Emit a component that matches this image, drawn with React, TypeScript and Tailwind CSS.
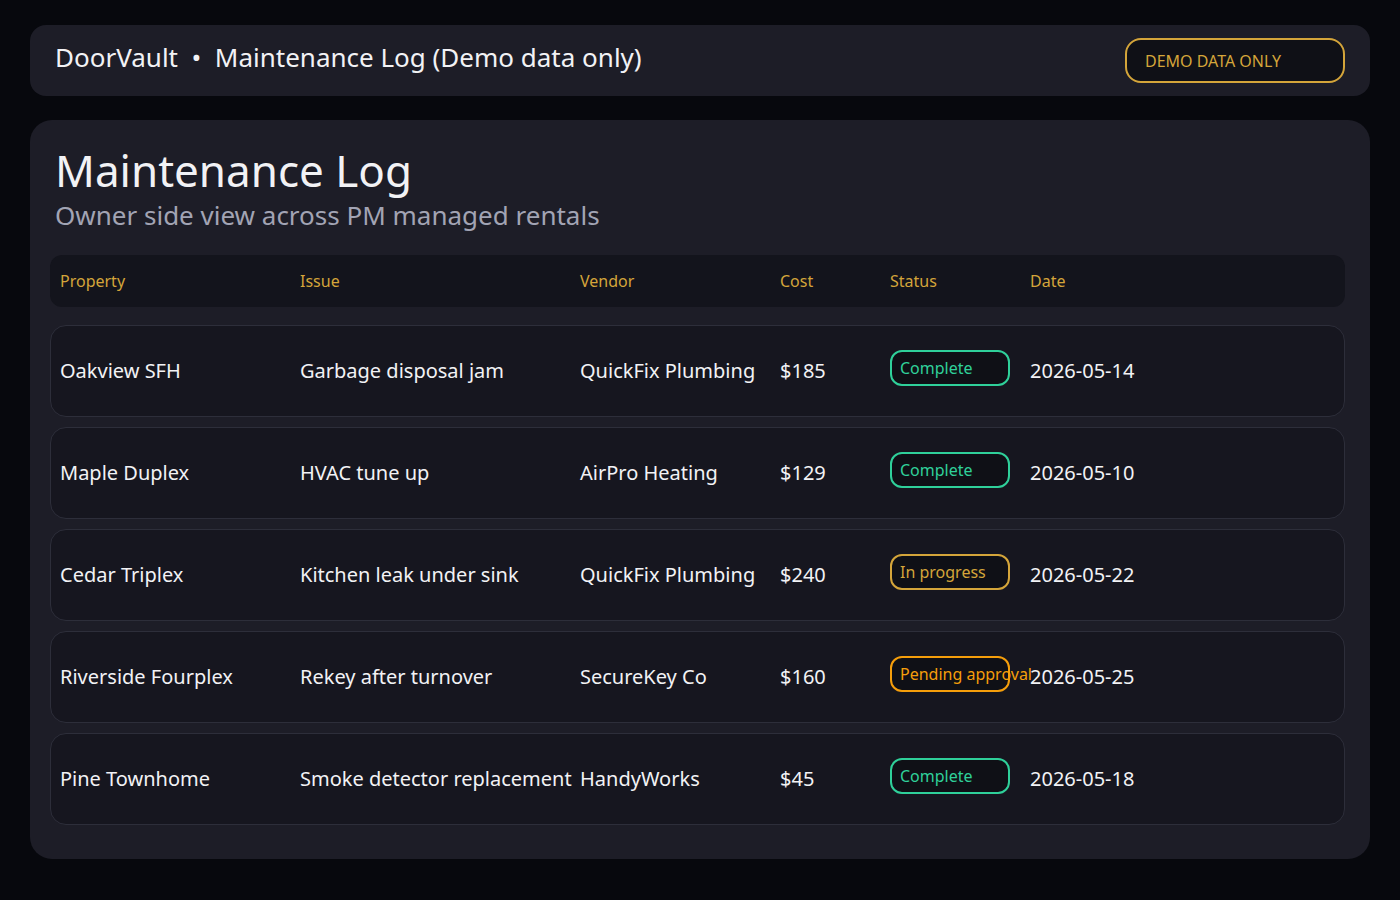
const rows = [
  { property: 'Oakview SFH', issue: 'Garbage disposal jam', vendor: 'QuickFix Plumbing', cost: '$185', status: 'Complete', date: '2026-05-14' },
  { property: 'Maple Duplex', issue: 'HVAC tune up', vendor: 'AirPro Heating', cost: '$129', status: 'Complete', date: '2026-05-10' },
  { property: 'Cedar Triplex', issue: 'Kitchen leak under sink', vendor: 'QuickFix Plumbing', cost: '$240', status: 'In progress', date: '2026-05-22' },
  { property: 'Riverside Fourplex', issue: 'Rekey after turnover', vendor: 'SecureKey Co', cost: '$160', status: 'Pending approval', date: '2026-05-25' },
  { property: 'Pine Townhome', issue: 'Smoke detector replacement', vendor: 'HandyWorks', cost: '$45', status: 'Complete', date: '2026-05-18' },
];

function StatusPill({ status }: { status: string }) {
  const tone =
    status === 'Complete'
      ? 'border-[#2fd09a] text-[#2fd09a]'
      : status === 'In progress'
      ? 'border-[#d4a53a] text-[#d4a53a]'
      : 'border-[#f59e0b] text-[#f59e0b]';
  return (
    <div className={`w-[120px] h-[36px] flex items-center pl-[8px] rounded-xl border-2 bg-[#0f1016] text-[16px] whitespace-nowrap -mt-[6px] ${tone}`}>
      {status}
    </div>
  );
}

export default function App() {
  return (
    <div className="min-h-[900px] bg-[#07080d] px-[30px] pt-[25px] pb-[40px] text-white font-['Liberation_Sans']">
      {/* Top bar */}
      <div className="h-[71px] rounded-2xl bg-[#1d1d27] flex items-center justify-between pl-[25px] pr-[25px]">
        <div className="text-[26px] text-[#f2f2f5] -mt-[6px]">DoorVault &nbsp;•&nbsp; Maintenance Log (Demo data only)</div>
        <div className="w-[220px] h-[45px] rounded-2xl border-2 border-[#d4a53a] bg-[#0f1016] text-[#d4a53a] text-[16px] pl-[18px] pt-[9px]">
          DEMO DATA ONLY
        </div>
      </div>

      {/* Main card */}
      <div className="mt-[24px] rounded-[22px] bg-[#1d1d27] pl-[20px] pr-[25px] pt-[24px] pb-[34px]">
        <h1 className="pl-[5px] text-[44px] leading-[52px] text-[#f2f2f5]">Maintenance Log</h1>
        <p className="pl-[5px] mt-[4px] text-[26px] leading-[30px] text-[#a2a4b4]">Owner side view across PM managed rentals</p>

        <div className="mt-[25px] h-[52px] rounded-xl bg-[#13141c] flex items-center px-[10px] text-[16px] text-[#d4a53a]">
          <div className="w-[240px]">Property</div>
          <div className="w-[280px]">Issue</div>
          <div className="w-[200px]">Vendor</div>
          <div className="w-[110px]">Cost</div>
          <div className="w-[140px]">Status</div>
          <div>Date</div>
        </div>

        <div className="mt-[18px] flex flex-col gap-[10px]">
          {rows.map((r) => (
            <div key={r.property} className="h-[92px] rounded-2xl border border-[#2d2e3a] bg-[#16161f] flex items-center px-[9px] text-[20px] text-[#f2f2f5]">
              <div className="w-[240px]">{r.property}</div>
              <div className="w-[280px]">{r.issue}</div>
              <div className="w-[200px]">{r.vendor}</div>
              <div className="w-[110px]">{r.cost}</div>
              <div className="w-[140px]">
                <StatusPill status={r.status} />
              </div>
              <div>{r.date}</div>
            </div>
          ))}
        </div>
      </div>
    </div>
  );
}
